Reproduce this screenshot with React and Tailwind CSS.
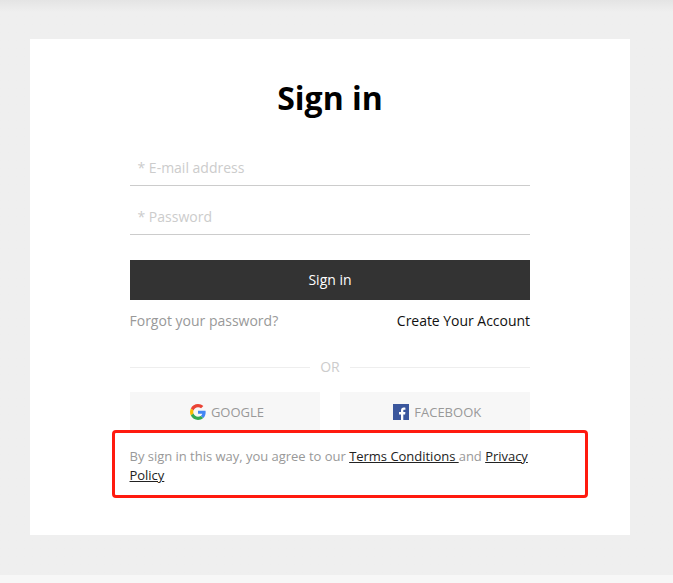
function GoogleIcon() {
  return (
    <svg viewBox="0 0 48 48" className="h-4 w-4 shrink-0">
      <path fill="#EA4335" d="M24 9.5c3.54 0 6.71 1.22 9.21 3.6l6.85-6.85C35.9 2.38 30.47 0 24 0 14.62 0 6.51 5.38 2.56 13.22l7.98 6.19C12.43 13.72 17.74 9.5 24 9.5z" />
      <path fill="#4285F4" d="M46.98 24.55c0-1.57-.15-3.09-.38-4.55H24v9.02h12.94c-.58 2.96-2.26 5.48-4.78 7.18l7.73 6c4.51-4.18 7.09-10.36 7.09-17.65z" />
      <path fill="#FBBC05" d="M10.53 28.59c-.48-1.45-.76-2.99-.76-4.59s.27-3.14.76-4.59l-7.98-6.19C.92 16.46 0 20.12 0 24c0 3.88.92 7.54 2.56 10.78l7.97-6.19z" />
      <path fill="#34A853" d="M24 48c6.48 0 11.93-2.13 15.89-5.81l-7.73-6c-2.15 1.45-4.92 2.3-8.16 2.3-6.26 0-11.57-4.22-13.47-9.91l-7.98 6.19C6.51 42.62 14.62 48 24 48z" />
    </svg>
  );
}

function FacebookIcon() {
  return (
    <svg viewBox="0 0 16 16" className="h-4 w-4 shrink-0">
      <path fill="#3b579d" d="M0 0h16v16H0z" />
      <path fill="#fff" d="M8 16v-5.6H6V8h2V6.6c0-2 1.1-3 2.8-3 .8 0 1.3.1 1.6.1v2h-1.1c-.9 0-1 .4-1 1V8h2.1l-.3 2.4h-1.8V16z" />
    </svg>
  );
}

export default function App() {
  return (
    <div className="h-[583px] w-[673px] overflow-hidden bg-[#f7f7f7] font-['Open_Sans',sans-serif] text-sm text-[#999]">
      <div className="h-[575px] bg-[#efefef] bg-linear-to-b from-[#e4e4e4] to-[#efefef] to-[12px] pt-[39px] pl-[30px]">
        <main className="h-[496px] w-[600px] bg-white px-[100px] pt-[36px]">
          <h1 className="h-[46px] text-center text-[32px] leading-[46px] font-bold text-black">Sign in</h1>
          <form className="pt-[29px]">
            <div className="h-9 border-b border-[#ccc] pl-[7.5px] leading-[36px] text-[#ccc]">* E-mail address</div>
            <div className="mt-[13px] h-9 border-b border-[#ccc] pl-[7.5px] leading-[36px] text-[#ccc]">* Password</div>
            <button type="button" className="mt-[25px] block h-10 w-full bg-[#333] font-medium text-white">Sign in</button>
          </form>
          <div className="flex h-[42px] items-center justify-between">
            <a className="-ml-[0.5px]">Forgot your password?</a>
            <a className="tracking-[-0.03px] text-[#111]">Create Your Account</a>
          </div>
          <div className="mt-[15px] flex h-5 items-center gap-[10px] text-[#ccc]">
            <span className="h-px flex-1 bg-[#eee]" />
            <span>OR</span>
            <span className="h-px flex-1 bg-[#eee]" />
          </div>
          <div className="mt-[15px] flex gap-5 text-[13px]">
            <button type="button" className="flex h-10 flex-1 items-center justify-center gap-[5px] bg-[#f7f7f7] pl-1"><GoogleIcon />GOOGLE</button>
            <button type="button" className="flex h-10 flex-1 items-center justify-center gap-[5.5px] bg-[#f7f7f7] pl-1"><FacebookIcon />FACEBOOK</button>
          </div>
          <div className="relative -mt-[2px] -ml-[18px] h-[68px] w-[476px] rounded-[4px] border-3 border-[#ff1a0f] bg-white pt-[14px] pl-[14.5px] text-[13px] leading-[19px] tracking-[-0.02px]">
            By sign in this way, you agree to our <a className="text-[#222] underline">Terms Conditions </a>and <a className="text-[#222] underline">Privacy<br />Policy</a>
          </div>
        </main>
      </div>
    </div>
  );
}
